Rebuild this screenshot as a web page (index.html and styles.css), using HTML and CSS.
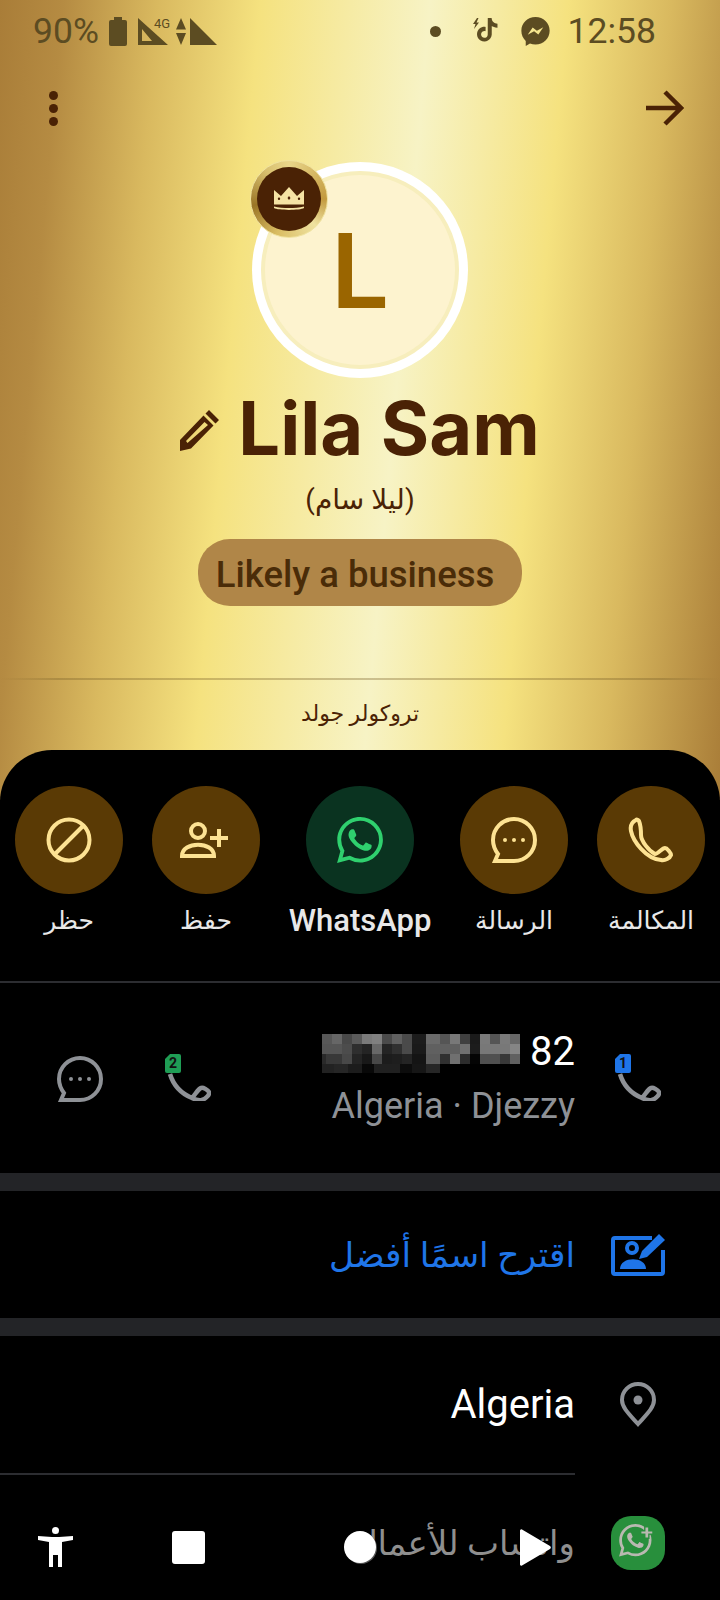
FILE: index.html
```html
<!DOCTYPE html>
<html lang="ar">
<head>
    <meta charset="UTF-8">
    <meta name="viewport" content="width=device-width, initial-scale=1.0">
    <title>Lila Sam</title>
    <link rel="stylesheet" href="styles.css">
</head>
<body>
<div class="page">
    <header class="gold">
        <div class="status" dir="ltr">
            <div class="status-left">
                <span class="status-text">90%</span>
                <svg class="ic-battery" viewBox="0 0 18 29"><path d="M5 0h8v3h3a2 2 0 0 1 2 2v22a2 2 0 0 1-2 2H2a2 2 0 0 1-2-2V5a2 2 0 0 1 2-2h3z"/></svg>
                <div class="signal-wrap">
                    <svg class="ic-signal" viewBox="0 0 30 27"><path fill-rule="evenodd" d="M0 0l30 27H0zM4 11v12h10z"/></svg>
                    <span class="tag-4g">4G</span>
                </div>
                <svg class="ic-updown" viewBox="0 0 10 27"><path d="M5 0l5 11.500H0zM0 15h10l-5 12z"/></svg>
                <svg class="ic-signal2" viewBox="0 0 27 27"><path d="M0 0l27 27H0z"/></svg>
            </div>
            <div class="status-right">
                <span class="dot"></span>
                <svg class="ic-tiktok" viewBox="0 0 26 26"><path d="M4 0L0 6h2.500L1 11l5-6.500H3.500L5.500 0z"/><g transform="translate(2.500 0) scale(.98)"><path d="M12.525.02c1.310-.02 2.610-.01 3.910-.02.08 1.530.63 3.090 1.750 4.170 1.120 1.110 2.700 1.620 4.240 1.790v4.030c-1.440-.05-2.890-.35-4.200-.97-.57-.26-1.100-.59-1.620-.93-.01 2.920.01 5.840-.02 8.750-.08 1.400-.54 2.790-1.350 3.940-1.310 1.920-3.580 3.170-5.910 3.210-1.430.08-2.860-.31-4.080-1.030-2.020-1.190-3.440-3.370-3.650-5.710-.02-.5-.03-1-.01-1.490.18-1.900 1.120-3.720 2.580-4.960 1.660-1.440 3.980-2.130 6.150-1.720.02 1.480-.04 2.960-.04 4.440-.99-.32-2.150-.23-3.020.37-.63.41-1.110 1.040-1.360 1.750-.21.51-.15 1.070-.14 1.610.24 1.640 1.820 3.020 3.500 2.870 1.120-.01 2.190-.66 2.770-1.610.19-.33.4-.67.41-1.060.1-1.790.06-3.570.07-5.360.01-4.030-.01-8.050.02-12.070z"/></g></svg>
                <svg class="ic-messenger" viewBox="2 2 20 20.500"><path fill-rule="evenodd" d="M12 2C6.400 2 2 6.100 2 11.700c0 2.900 1.200 5.400 3.100 7.200v3.600l3-1.700c1.200.4 2.500.6 3.900.6 5.600 0 10-4.100 10-9.700S17.600 2 12 2zM6.500 14.500L10 9.500l3 2.300 4.500-2.500-3.500 5-3-2.300z"/></svg>
                <span class="status-text">12:58</span>
            </div>
        </div>

        <div class="topbar" dir="ltr">
            <div class="dots"><i></i><i></i><i></i></div>
            <svg class="ic-arrow" viewBox="0 0 38 36"><path d="M0 18h35M19 2l16 16-16 16"/></svg>
        </div>

        <div class="avatar">
            <div class="avatar-inner">L</div>
            <div class="badge">
                <div class="badge-inner">
                    <svg class="ic-crown" viewBox="0 0 30 24"><path fill-rule="evenodd" d="M0 3l7 6 8-9 8 9 7-6v14.500H0zM15 9l-1.500 2L15 13l1.500-2zM5 10.500a1.200 1.200 0 1 0 0 2.400 1.200 1.200 0 0 0 0-2.400zM25 10.500a1.200 1.200 0 1 0 0 2.400 1.200 1.200 0 0 0 0-2.400z"/><path d="M0 19.500c9 2 21 2 30 0v1.500c-4 2.500-26 2.500-30 0z"/></svg>
                </div>
            </div>
        </div>

        <div class="name-row" dir="ltr">
            <svg class="ic-pencil" viewBox="0 0 40 42"><path fill-rule="evenodd" d="M29 1l10 10-3.500 3.500-10-10zM23.500 6.500l10 10L11 39.500 0 42V31zM24.500 13L6 32l1.500 2L28 16z"/></svg>
            <h1 class="name">Lila Sam</h1>
        </div>
        <p class="alt-name">(ليلا سام)</p>
        <div class="pill" dir="ltr">Likely a business</div>
        <div class="gold-line"></div>
        <p class="gold-label">تروكولر جولد</p>
    </header>

    <main class="sheet" dir="rtl">
        <div class="actions">
            <div class="action">
                <div class="circle">
                    <svg class="ic-act" viewBox="0 0 46 46"><path d="M8 3C4 5 2 9 3 14c2 10 15 28 30 29 4 1 9-2 10-5 0-2-4-7-6-7-3 0-7 6-10 6-6-3-14-13-14-19 0-4 0-9-2-14-1-1-2-2-3-1z"/></svg>
                </div>
                <span class="action-label">المكالمة</span>
            </div>
            <div class="action">
                <div class="circle">
                    <svg class="ic-act" viewBox="0 0 46 46"><path d="M23 2A21 21 0 0 0 2 23c0 5 2 10 5 14l-3 7h19a21 21 0 0 0 0-42z"/><circle class="fill" cx="14" cy="23" r="2"/><circle class="fill" cx="23" cy="23" r="2"/><circle class="fill" cx="32" cy="23" r="2"/></svg>
                </div>
                <span class="action-label">الرسالة</span>
            </div>
            <div class="action">
                <div class="circle circle-wa">
                    <svg class="ic-wa" viewBox="0 0 24 24"><path d="M17.472 14.382c-.297-.149-1.758-.867-2.030-.967-.273-.099-.471-.148-.67.15-.197.297-.767.966-.94 1.164-.173.199-.347.223-.644.075-.297-.15-1.255-.463-2.390-1.475-.883-.788-1.480-1.761-1.653-2.059-.173-.297-.018-.458.13-.606.134-.133.298-.347.446-.52.149-.174.198-.298.298-.497.099-.198.05-.371-.025-.52-.075-.149-.669-1.612-.916-2.207-.242-.579-.487-.5-.669-.51-.173-.008-.371-.01-.57-.01-.198 0-.52.074-.792.372-.272.297-1.040 1.016-1.040 2.479 0 1.462 1.065 2.875 1.213 3.074.149.198 2.096 3.200 5.077 4.487.709.306 1.262.489 1.694.625.712.227 1.360.195 1.871.118.571-.085 1.758-.719 2.006-1.413.248-.694.248-1.289.173-1.413-.074-.124-.272-.198-.57-.347m-5.421 7.403h-.004a9.870 9.870 0 01-5.031-1.378l-.361-.214-3.741.982.998-3.648-.235-.374a9.860 9.860 0 01-1.510-5.260c.001-5.450 4.436-9.884 9.888-9.884 2.640 0 5.122 1.030 6.988 2.898a9.825 9.825 0 012.893 6.994c-.003 5.450-4.437 9.884-9.885 9.884m8.413-18.297A11.815 11.815 0 0012.050 0C5.495 0 .16 5.335.157 11.892c0 2.096.547 4.142 1.588 5.945L.057 24l6.305-1.654a11.882 11.882 0 005.683 1.448h.005c6.554 0 11.890-5.335 11.893-11.893a11.821 11.821 0 00-3.480-8.413z"/></svg>
                </div>
                <span class="action-label action-label-wa" dir="ltr">WhatsApp</span>
            </div>
            <div class="action">
                <div class="circle">
                    <svg class="ic-act ic-add" viewBox="0 0 52 36"><circle cx="18" cy="9" r="7"/><path d="M2 34c0-15 32-15 32 0z"/><path d="M39 7v18M30 16h18"/></svg>
                </div>
                <span class="action-label">حفظ</span>
            </div>
            <div class="action">
                <div class="circle">
                    <svg class="ic-act" viewBox="0 0 46 46"><circle cx="23" cy="23" r="20.500"/><path d="M9 37L37 9"/></svg>
                </div>
                <span class="action-label">حظر</span>
            </div>
        </div>

        <div class="row number-row">
            <div class="row-icon">
                <svg class="ic-sim" viewBox="0 0 46 47">
                    <path class="sim-line" d="M5 20C8 30 15 39 27 44c4 2 7 3 10 2 3-1 8-5 7-8-1-2-6-5-8-4-3 1-6 7-9 10"/>
                    <path class="sim-blue" d="M5 0h9a2 2 0 0 1 2 2v15a2 2 0 0 1-2 2H2a2 2 0 0 1-2-2V5z"/>
                    <text class="sim-num" x="8" y="14">1</text>
                </svg>
            </div>
            <div class="number-text">
                <div class="number-line" dir="ltr">
                    <svg class="pixels" viewBox="0 0 198 39">
                        <g>
                            <rect x="0" y="0" width="10" height="10" fill="#585858"/><rect x="10" y="0" width="10" height="10" fill="#666"/><rect x="20" y="0" width="10" height="10" fill="#484848"/><rect x="30" y="0" width="10" height="10" fill="#5a5a5a"/><rect x="40" y="0" width="10" height="10" fill="#7a7a7a"/><rect x="50" y="0" width="10" height="10" fill="#808080"/><rect x="60" y="0" width="10" height="10" fill="#4a4a4a"/><rect x="70" y="0" width="10" height="10" fill="#606060"/><rect x="80" y="0" width="10" height="10" fill="#4a4a4a"/><rect x="90" y="0" width="14" height="10" fill="#1c1c1c"/><rect x="104" y="0" width="14" height="10" fill="#6a6a6a"/><rect x="118" y="0" width="10" height="10" fill="#555"/><rect x="128" y="0" width="10" height="10" fill="#787878"/><rect x="138" y="0" width="10" height="10" fill="#404040"/><rect x="148" y="0" width="10" height="10" fill="#1a1a1a"/><rect x="158" y="0" width="10" height="10" fill="#7a7a7a"/><rect x="168" y="0" width="10" height="10" fill="#555"/><rect x="178" y="0" width="10" height="10" fill="#7a7a7a"/><rect x="188" y="0" width="10" height="10" fill="#686868"/>
                        </g>
                        <g>
                            <rect x="0" y="10" width="20" height="10" fill="#555"/><rect x="20" y="10" width="10" height="10" fill="#4c4c4c"/><rect x="30" y="10" width="10" height="10" fill="#2e2e2e"/><rect x="40" y="10" width="10" height="10" fill="#242424"/><rect x="50" y="10" width="10" height="10" fill="#686868"/><rect x="60" y="10" width="10" height="10" fill="#242424"/><rect x="70" y="10" width="10" height="10" fill="#303030"/><rect x="80" y="10" width="10" height="10" fill="#4a4a4a"/><rect x="90" y="10" width="14" height="10" fill="#1a1a1a"/><rect x="104" y="10" width="34" height="10" fill="#606060"/><rect x="138" y="10" width="10" height="10" fill="#707070"/><rect x="148" y="10" width="10" height="10" fill="#1c1c1c"/><rect x="158" y="10" width="30" height="10" fill="#787878"/><rect x="188" y="10" width="10" height="10" fill="#858585"/>
                        </g>
                        <g>
                            <rect x="0" y="20" width="4" height="10" fill="#2a2a2a"/><rect x="4" y="20" width="16" height="10" fill="#383838"/><rect x="20" y="20" width="10" height="10" fill="#484848"/><rect x="30" y="20" width="10" height="10" fill="#242424"/><rect x="40" y="20" width="10" height="10" fill="#181818"/><rect x="50" y="20" width="10" height="10" fill="#484848"/><rect x="60" y="20" width="10" height="10" fill="#1c1c1c"/><rect x="70" y="20" width="10" height="10" fill="#1e1e1e"/><rect x="80" y="20" width="10" height="10" fill="#242424"/><rect x="90" y="20" width="14" height="10" fill="#141414"/><rect x="104" y="20" width="14" height="10" fill="#5c5c5c"/><rect x="118" y="20" width="10" height="10" fill="#303030"/><rect x="128" y="20" width="10" height="10" fill="#707070"/><rect x="138" y="20" width="10" height="10" fill="#2c2c2c"/><rect x="148" y="20" width="10" height="10" fill="#040404"/><rect x="158" y="20" width="20" height="10" fill="#505050"/><rect x="178" y="20" width="10" height="10" fill="#383838"/><rect x="188" y="20" width="10" height="10" fill="#606060"/>
                        </g>
                        <g>
                            <rect x="0" y="30" width="12" height="9" fill="#222"/><rect x="12" y="30" width="14" height="9" fill="#262626"/><rect x="26" y="30" width="14" height="9" fill="#1c1c1c"/><rect x="40" y="30" width="12" height="9" fill="#080808"/><rect x="52" y="30" width="26" height="9" fill="#202020"/><rect x="78" y="30" width="12" height="9" fill="#0c0c0c"/><rect x="90" y="30" width="14" height="9" fill="#161616"/><rect x="104" y="30" width="14" height="9" fill="#262626"/>
                        </g>
                    </svg>
                    <span class="number-end">82</span>
                </div>
                <div class="number-sub" dir="ltr">Algeria · Djezzy</div>
            </div>
            <div class="row-end">
                <svg class="ic-sim" viewBox="0 0 46 47">
                    <path class="sim-line" d="M5 20C8 30 15 39 27 44c4 2 7 3 10 2 3-1 8-5 7-8-1-2-6-5-8-4-3 1-6 7-9 10"/>
                    <path class="sim-green" d="M5 0h9a2 2 0 0 1 2 2v15a2 2 0 0 1-2 2H2a2 2 0 0 1-2-2V5z"/>
                    <text class="sim-num" x="8" y="14">2</text>
                </svg>
                <svg class="ic-msg-grey" viewBox="0 0 46 46"><path d="M23 2A21 21 0 0 0 2 23c0 5 2 10 5 14l-3 7h19a21 21 0 0 0 0-42z"/><circle class="fill" cx="14" cy="23" r="2"/><circle class="fill" cx="23" cy="23" r="2"/><circle class="fill" cx="32" cy="23" r="2"/></svg>
            </div>
        </div>

        <div class="band"></div>

        <div class="row suggest-row">
            <div class="row-icon">
                <svg class="ic-suggest" viewBox="0 0 54 43"><path d="M41 5H4a2 2 0 0 0-2 2v32a2 2 0 0 0 2 2h46a2 2 0 0 0 2-2V17"/><circle cx="21" cy="15" r="5"/><path class="solid" d="M9 36c0-13 26-13 26 0z"/><path class="solid" d="M48 1l6 6-18 17-8 2 3-8z"/></svg>
            </div>
            <span class="suggest-text">اقترح اسمًا أفضل</span>
        </div>

        <div class="band"></div>

        <div class="row place-row">
            <div class="row-icon">
                <svg class="ic-pin" viewBox="0 0 36 45"><path d="M18 42C10 33 2 26 2 18a16 16 0 0 1 32 0c0 8-8 15-16 24z"/><circle class="fill" cx="18" cy="18" r="4.500"/></svg>
            </div>
            <span class="place-text" dir="ltr">Algeria</span>
        </div>
        <div class="row-line"></div>
        <div class="row biz-row">
            <div class="row-icon">
                <div class="biz-icon">
                    <svg class="ic-biz" viewBox="0 0 28 28"><path d="M17.472 14.382c-.297-.149-1.758-.867-2.030-.967-.273-.099-.471-.148-.67.15-.197.297-.767.966-.94 1.164-.173.199-.347.223-.644.075-.297-.15-1.255-.463-2.390-1.475-.883-.788-1.480-1.761-1.653-2.059-.173-.297-.018-.458.13-.606.134-.133.298-.347.446-.52.149-.174.198-.298.298-.497.099-.198.05-.371-.025-.52-.075-.149-.669-1.612-.916-2.207-.242-.579-.487-.5-.669-.51-.173-.008-.371-.01-.57-.01-.198 0-.52.074-.792.372-.272.297-1.040 1.016-1.040 2.479 0 1.462 1.065 2.875 1.213 3.074.149.198 2.096 3.200 5.077 4.487.709.306 1.262.489 1.694.625.712.227 1.360.195 1.871.118.571-.085 1.758-.719 2.006-1.413.248-.694.248-1.289.173-1.413-.074-.124-.272-.198-.57-.347m-5.421 7.403h-.004a9.870 9.870 0 01-5.031-1.378l-.361-.214-3.741.982.998-3.648-.235-.374a9.860 9.860 0 01-1.510-5.260c.001-5.450 4.436-9.884 9.888-9.884 2.640 0 5.122 1.030 6.988 2.898a9.825 9.825 0 012.893 6.994c-.003 5.450-4.437 9.884-9.885 9.884m8.413-18.297A11.815 11.815 0 0012.050 0C5.495 0 .16 5.335.157 11.892c0 2.096.547 4.142 1.588 5.945L.057 24l6.305-1.654a11.882 11.882 0 005.683 1.448h.005c6.554 0 11.890-5.335 11.893-11.893a11.821 11.821 0 00-3.480-8.413z"/><path class="biz-plus" d="M18.500 1.500h4v3h3v3.500h-3v3h-4v-3h-3V4.500h3z"/><path d="M19.500 2.500h2v3h3v1.500h-3v3h-2V7h-3V5.500h3z"/></svg>
                </div>
            </div>
            <span class="biz-text">واتساب للأعمال</span>
        </div>
    </main>

    <nav class="navbar" dir="ltr">
        <svg class="nav-a11y" viewBox="0 0 35 40"><circle cx="17.500" cy="3.500" r="3.500"/><path d="M0 9l14 1h7l14-1v4l-11 2v25h-4V28h-5v12h-4V15L0 13z"/></svg>
        <div class="nav-square"></div>
        <div class="nav-circle"></div>
        <svg class="nav-play" viewBox="0 0 31 37"><path d="M2 .5L30 17a2 2 0 0 1 0 3L2 36.500a1.300 1.300 0 0 1-2-1V1.500a1.300 1.300 0 0 1 2-1z"/></svg>
    </nav>
</div>
</body>
</html>
```

FILE: styles.css
```css
* {
    box-sizing: border-box;
}
html, body {
    margin: 0;
    padding: 0;
    background: #000;
}
body {
    font-family: Roboto, "DejaVu Sans", sans-serif;
}
.page {
    position: relative;
    width: 720px;
    height: 1600px;
    overflow: hidden;
    background-image: linear-gradient(95deg, #a97d38 0%, #b58b42 8%, #d9b95f 20%, #f5e27f 33%, #f7f3c5 54.5%, #f5e27f 72%, #d9b95f 85%, #a97d38 100%);
    background-size: 100% 800px;
    background-repeat: no-repeat;
}

/* gold part */
.gold {
    height: 750px;
    text-align: center;
    color: #4a2205;
}
.status {
    display: flex;
    justify-content: space-between;
    align-items: center;
    height: 62px;
    padding: 0 64px 0 33px;
    color: #5c4c22;
}
.status svg {
    fill: #5c4c22;
    display: block;
}
.status-left, .status-right {
    display: flex;
    align-items: center;
}
.status-text {
    font-size: 35.500px;
    line-height: 40px;
}
.ic-battery {
    width: 18px;
    height: 29px;
    margin-left: 10px;
}
.signal-wrap {
    position: relative;
    margin-left: 11px;
}
.ic-signal {
    width: 30px;
    height: 27px;
}
.tag-4g {
    position: absolute;
    left: 16px;
    top: -1px;
    font-size: 13px;
    line-height: 14px;
}
.ic-updown {
    width: 10px;
    height: 27px;
    margin-left: 8px;
}
.ic-signal2 {
    width: 27px;
    height: 27px;
    margin-left: 4px;
}
.dot {
    width: 11px;
    height: 11px;
    border-radius: 50%;
    background: #5c4c22;
}
.ic-tiktok {
    width: 26px;
    height: 26px;
    margin-left: 32px;
}
.ic-messenger {
    width: 29px;
    height: 29px;
    margin-left: 22px;
}
.status-right .status-text {
    margin-left: 18px;
}
.topbar {
    display: flex;
    justify-content: space-between;
    align-items: center;
    height: 56px;
    margin-top: 18px;
    padding: 0 36px 0 49px;
}
.dots {
    display: flex;
    flex-direction: column;
    gap: 4px;
}
.dots i {
    display: block;
    width: 9px;
    height: 9px;
    border-radius: 50%;
    background: #4a2205;
}
.ic-arrow {
    width: 38px;
    height: 36px;
    fill: none;
    stroke: #4a2205;
    stroke-width: 4.500;
}
.avatar {
    position: relative;
    width: 216px;
    height: 216px;
    margin: 26px auto 0;
    padding: 9px;
    border-radius: 50%;
    background: #fff;
}
.avatar-inner {
    display: flex;
    align-items: center;
    justify-content: center;
    width: 100%;
    height: 100%;
    border-radius: 50%;
    background: #fdf3cf;
    border: 4px solid #f7eebd;
    font-family: Inter, sans-serif;
    font-size: 103px;
    font-weight: 600;
    color: #9a6500;
}
.badge {
    position: absolute;
    left: -2px;
    top: -2px;
    width: 78px;
    height: 78px;
    padding: 6px;
    border-radius: 50%;
    border: 1px solid #f0e3a0;
    background: conic-gradient(#e9d68a 0deg, #c39a3e 90deg, #efe2a0 135deg, #d9bc62 200deg, #9a7526 260deg, #d8bf6e 320deg, #e9d68a 360deg);
}
.badge-inner {
    display: flex;
    align-items: center;
    justify-content: center;
    width: 100%;
    height: 100%;
    border-radius: 50%;
    background: #4a2205;
}
.ic-crown {
    width: 30px;
    height: 24px;
    fill: #f5e3a4;
}
.name-row {
    display: flex;
    align-items: center;
    justify-content: center;
    gap: 18px;
    height: 86px;
    margin-top: 7px;
}
.ic-pencil {
    width: 40px;
    height: 42px;
    fill: #4a2205;
    margin-top: 4px;
}
.name {
    margin: 0;
    font-family: Inter, sans-serif;
    font-size: 74px;
    font-weight: 700;
    line-height: 86px;
    color: #4a2205;
}
.alt-name {
    margin: 9px 0 0;
    font-size: 28px;
    line-height: 40px;
}
.pill {
    width: 324px;
    height: 67px;
    margin: 19px auto 0;
    padding-right: 10px;
    border-radius: 32px;
    background: #b08648;
    font-size: 36.500px;
    font-weight: 500;
    line-height: 72px;
    color: #4a2c08;
}
.gold-line {
    height: 2px;
    margin-top: 72px;
    background: linear-gradient(90deg, transparent 0%, rgba(120, 95, 40, .35) 8%, rgba(120, 95, 40, .35) 92%, transparent 100%);
}
.gold-label {
    margin: 16px 0 0;
    font-size: 22px;
    line-height: 36px;
}

/* black sheet */
.sheet {
    height: 850px;
    border-radius: 52px 52px 0 0;
    background: #000;
    color: #fff;
}
.actions {
    display: grid;
    grid-template-columns: 138px 136px 172px 136px 138px;
    height: 233px;
    padding-top: 36px;
    border-bottom: 2px solid #2c2d31;
}
.action {
    display: flex;
    flex-direction: column;
    align-items: center;
}
.circle {
    display: flex;
    align-items: center;
    justify-content: center;
    width: 108px;
    height: 108px;
    border-radius: 50%;
    background: #5a3a05;
}
.circle-wa {
    background: #0a3320;
}
.ic-act {
    width: 46px;
    height: 46px;
    fill: none;
    stroke: #fde293;
    stroke-width: 4;
}
.ic-act .fill {
    fill: #fde293;
    stroke: none;
}
.ic-add {
    width: 52px;
    height: 36px;
}
.ic-wa {
    width: 46px;
    height: 46px;
    fill: #2fd06e;
}
.action-label {
    margin-top: 8px;
    font-size: 25px;
    line-height: 38px;
    color: #e8e8e8;
}
.action-label-wa {
    font-size: 31px;
    font-weight: 500;
}
.row {
    display: flex;
    align-items: center;
}
.row-icon {
    display: flex;
    justify-content: center;
    width: 145px;
    flex: none;
    padding-right: 19px;
}
.number-row {
    height: 190px;
    padding-top: 2px;
}
.number-text {
    flex: none;
    width: 300px;
}
.number-line {
    display: flex;
    align-items: center;
    justify-content: flex-end;
    height: 44px;
}
.pixels {
    width: 198px;
    height: 39px;
    margin-right: 10px;
    margin-top: 2px;
}
.number-end {
    font-size: 40px;
    line-height: 44px;
    color: #fff;
}
.number-sub {
    margin-top: 10px;
    font-size: 36px;
    line-height: 44px;
    color: #8e9196;
    text-align: right;
}
.ic-sim {
    width: 46px;
    height: 47px;
    margin-top: -4px;
    fill: none;
}
.sim-line {
    fill: none;
    stroke: #8e9196;
    stroke-width: 4.500;
}
.sim-blue {
    fill: #1f75e8;
}
.sim-green {
    fill: #1f9d55;
}
.sim-num {
    font-size: 14px;
    font-weight: 700;
    text-anchor: middle;
    fill: #111;
}
.row-end {
    display: flex;
    align-items: center;
    flex: 1;
    justify-content: flex-end;
    gap: 62px;
    padding-left: 57px;
}
.ic-msg-grey {
    width: 46px;
    height: 46px;
    fill: none;
    stroke: #8e9196;
    stroke-width: 4;
}
.ic-msg-grey .fill {
    fill: #8e9196;
    stroke: none;
}
.band {
    height: 18px;
    background: #232427;
}
.suggest-row {
    height: 127px;
}
.ic-suggest {
    width: 54px;
    height: 43px;
    fill: none;
    stroke: #1f75e8;
    stroke-width: 4;
}
.ic-suggest .solid {
    fill: #1f75e8;
    stroke: none;
}
.suggest-text {
    font-size: 34.500px;
    color: #1f75e8;
}
.place-row {
    height: 137px;
}
.ic-pin {
    width: 36px;
    height: 45px;
    fill: none;
    stroke: #8e9196;
    stroke-width: 4;
}
.ic-pin .fill {
    fill: #8e9196;
    stroke: none;
}
.place-text {
    font-size: 40px;
    color: #fff;
}
.row-line {
    height: 2px;
    margin-right: 145px;
    background: #2c2d31;
}
.biz-row {
    height: 136px;
}
.biz-icon {
    display: flex;
    align-items: center;
    justify-content: center;
    width: 54px;
    height: 54px;
    border-radius: 20px;
    background: #288f3c;
}
.ic-biz {
    width: 38px;
    height: 38px;
    fill: #b9b9b1;
}
.ic-biz .biz-plus {
    fill: #288f3c;
}
.biz-text {
    font-size: 34px;
    color: #8f8f8f;
}

/* android nav buttons sit on top of the sheet */
.navbar {
    position: absolute;
    left: 0;
    top: 1527px;
    display: flex;
    align-items: center;
    padding-left: 38px;
    height: 40px;
}
.nav-a11y {
    width: 35px;
    height: 40px;
    fill: #fff;
}
.nav-square {
    width: 33px;
    height: 33px;
    margin-left: 99px;
    border-radius: 3px;
    background: #fff;
}
.nav-circle {
    width: 32px;
    height: 32px;
    margin-left: 139px;
    border-radius: 50%;
    background: #fff;
    box-shadow: 1px 1px 0 #555;
}
.nav-play {
    width: 31px;
    height: 37px;
    margin-left: 144px;
    fill: #fff;
}
```
